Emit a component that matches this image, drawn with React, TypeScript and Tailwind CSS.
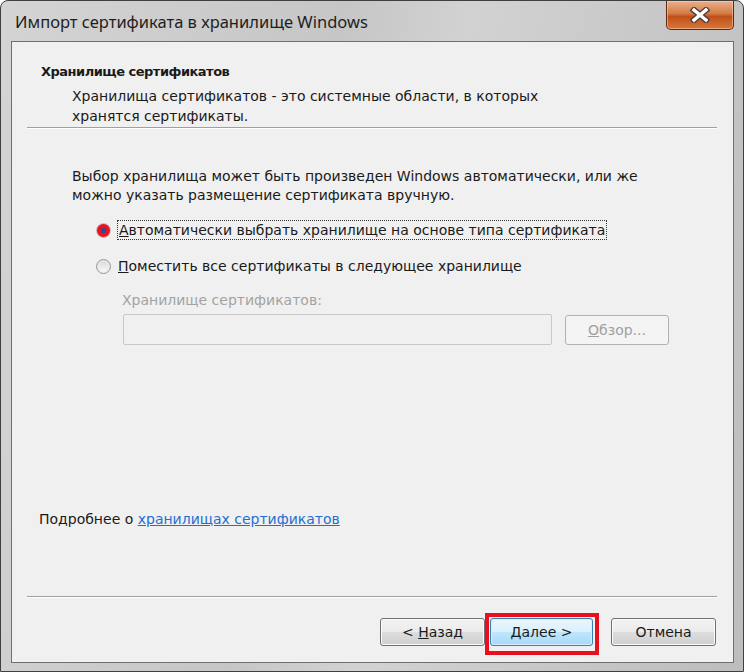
import React from 'react';

function CloseButton() {
  return (
    <div className="mr-[9px] flex h-[29px] w-[68px] items-center justify-center rounded-b-[5px] border border-t-0 border-[#5b2b12] bg-[linear-gradient(#eab08c_0%,#d57a45_45%,#c0501a_55%,#d8773a_100%)] shadow-[inset_0_0_0_1px_rgba(255,220,190,0.5)]">
      <svg width="22" height="16" viewBox="0 0 22 16">
        <path d="M5 3 L17 13 M17 3 L5 13" stroke="#4a3a34" strokeWidth="6" strokeLinecap="square" />
        <path d="M5 3 L17 13 M17 3 L5 13" stroke="#ffffff" strokeWidth="3.4" strokeLinecap="square" />
      </svg>
    </div>
  );
}

function Radio({ checked }: { checked?: boolean }) {
  if (checked) {
    return (
      <span className="flex h-[15px] w-[15px] items-center justify-center rounded-full border border-[#c9c9c9] bg-[#e8141f]">
        <span className="h-[5px] w-[5px] rounded-full bg-[#1a4fb8]" />
      </span>
    );
  }
  return (
    <span className="flex h-[15px] w-[15px] items-center justify-center rounded-full border border-[#9a9a9a] bg-[radial-gradient(circle_at_50%_60%,#f4f4f4_30%,#d4d4d4_100%)]">
      <span className="h-[9px] w-[9px] rounded-full bg-[linear-gradient(#dcdcdc,#f6f6f6)]" />
    </span>
  );
}

function WinButton({ children, primary, disabled, className = '' }: { children: React.ReactNode; primary?: boolean; disabled?: boolean; className?: string }) {
  const look = disabled
    ? 'border-[#adb2b5] bg-[#f4f4f4] text-[#a0a0a0]'
    : primary
    ? 'border-[#3c7fb1] bg-[linear-gradient(#eaf6fd_0%,#d9f0fc_50%,#bee6fd_51%,#a7d9f5_100%)] shadow-[inset_0_0_0_1px_#d6efff]'
    : 'border-[#707070] bg-[linear-gradient(#f2f2f2_0%,#ebebeb_50%,#dddddd_51%,#cfcfcf_100%)] shadow-[inset_0_0_0_1px_#fbfbfb]';
  return (
    <div className={`flex items-center justify-center rounded-[3px] border text-[14px] text-[#1a1a1a] ${look} ${className}`}>
      {children}
    </div>
  );
}

export default function App() {
  return (
    <div className="h-[672px] w-[744px] bg-white">
      <div className="flex h-[672px] w-[744px] flex-col rounded-t-[8px] border border-[#3f3f3f] bg-[linear-gradient(100deg,#d4d4d4_0%,#c6c6c6_40%,#d2d2d2_55%,#bdbdbd_100%)] font-['DejaVu_Sans',sans-serif] text-[14px] text-[#1a1a1a]">
        <div className="flex h-[40px] shrink-0 items-start justify-between">
          <div className="pl-[14px] pt-[10px] font-['Noto_Sans',sans-serif] text-[16.5px] leading-[22px] text-[#1e1e1e]">
            Импорт сертификата в хранилище Windows
          </div>
          <CloseButton />
        </div>
        <div className="mb-[8px] ml-[10px] mr-[9px] flex flex-1 flex-col border border-[#6f6f6f] bg-[#f0f0f0]">
          <div className="pl-[29px] pt-[20px]">
            <div className="text-[13px] font-bold leading-[20px] tracking-[-0.5px]">Хранилище сертификатов</div>
            <div className="ml-[31px] mt-[4px] leading-[20px]">
              Хранилища сертификатов - это системные области, в которых
              <br />
              хранятся сертификаты.
            </div>
          </div>
          <div className="ml-[15px] mr-[16px] mt-[1px] border-t border-b border-t-[#a0a0a0] border-b-[#ffffff]" />
          <div className="ml-[60px] mt-[38px] leading-[19px]">
            Выбор хранилища может быть произведен Windows автоматически, или же
            <br />
            можно указать размещение сертификата вручную.
          </div>
          <div className="ml-[84px] mt-[15px] flex h-[20px] items-center">
            <Radio checked />
            <span className="ml-[6px] border border-dotted border-[#333] px-[1px] leading-[18px]">
              <span className="underline">А</span>втоматически выбрать хранилище на основе типа сертификата
            </span>
          </div>
          <div className="ml-[84px] mt-[16px] flex h-[20px] items-center">
            <Radio />
            <span className="ml-[7px] leading-[18px]">
              <span className="underline">П</span>оместить все сертификаты в следующее хранилище
            </span>
          </div>
          <div className="ml-[110px] mt-[15px] leading-[18px] text-[#a3a3a3]">Хранилище сертификатов:</div>
          <div className="ml-[111px] mt-[5px] flex items-start">
            <div className="h-[31px] w-[429px] rounded-[2px] border border-[#c8c8c8] bg-[#f0f0f0]" />
            <WinButton disabled className="ml-[13px] mt-[1px] h-[30px] w-[104px]">
              <span><span className="underline">О</span>бзор...</span>
            </WinButton>
          </div>
          <div className="ml-[27px] mt-[164px] leading-[20px]">
            Подробнее о <span className="text-[#1f6fd0] underline">хранилищах сертификатов</span>
          </div>
          <div className="ml-[15px] mr-[16px] mt-[67px] border-t border-b border-t-[#a0a0a0] border-b-[#ffffff]" />
          <div className="mr-[17px] mt-[15px] flex items-start justify-end">
            <WinButton className="mt-[5px] h-[28px] w-[105px]">
              <span>&lt; <span className="underline">Н</span>азад</span>
            </WinButton>
            <div className="border-[4px] border-[#e8101f] pb-[5px] pl-[1px] pr-[2px] pt-[1px]">
              <WinButton primary className="h-[28px] w-[103px]">
                <span><span className="underline">Д</span>алее &gt;</span>
              </WinButton>
            </div>
            <WinButton className="ml-[12px] mt-[5px] h-[28px] w-[105px]">Отмена</WinButton>
          </div>
        </div>
      </div>
    </div>
  );
}
